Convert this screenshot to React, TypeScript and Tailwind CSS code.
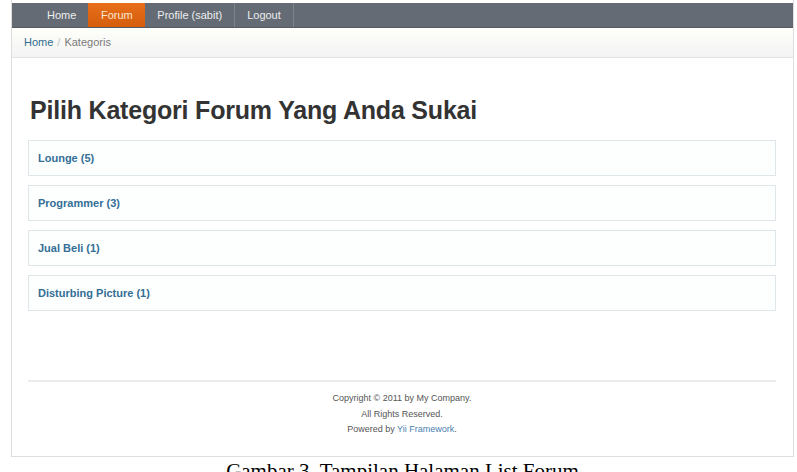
import React from "react";

const categories = [
  { name: "Lounge", count: 5 },
  { name: "Programmer", count: 3 },
  { name: "Jual Beli", count: 1 },
  { name: "Disturbing Picture", count: 1 },
];

const menu = [
  { label: "Home", active: false, sep: false },
  { label: "Forum", active: true, sep: false },
  { label: "Profile (sabit)", active: false, sep: true },
  { label: "Logout", active: false, sep: true },
];

export default function App() {
  return (
    <div className="w-[797px] h-[472px] overflow-hidden bg-white font-['Liberation_Sans',Arial,sans-serif]">
      {/* Page container */}
      <div className="ml-[11px] w-[783px] h-[457px] border-x border-b border-[#dedede] pt-[3px] flex flex-col">
        {/* Main menu */}
        <div className="h-[25px] bg-[#646b74] border-b border-[#555b63] flex items-stretch pl-[23px]">
          {menu.map((item) => (
            <div
              key={item.label}
              className={`flex items-center justify-center px-[12px] text-[11px] ${
                item.active
                  ? "bg-gradient-to-b from-[#e8701a] to-[#d45d0c] text-[#fbe6cf] w-[57px]"
                  : "text-[#eceef0]"
              } ${item.sep ? "border-r border-[#7d838b]" : ""}`}
            >
              {item.label}
            </div>
          ))}
        </div>

        {/* Breadcrumbs */}
        <div className="h-[30px] bg-gradient-to-b from-[#fffffb] to-[#f2f3f3] border-b border-[#e3e3e3] flex items-center pl-[12px] text-[11px]">
          <span className="text-[#2f6d8e]">Home</span>
          <span className="text-[#c5c5c5] mx-[4px]">/</span>
          <span className="text-[#7a7a7a]">Kategoris</span>
        </div>

        {/* Content */}
        <div className="pl-[16px] pr-[17px] pt-[37px] flex-1 flex flex-col">
          <h1 className="text-[25px] leading-[30px] font-bold text-[#333] pl-[2px] tracking-[-0.2px]">
            Pilih Kategori Forum Yang Anda Sukai
          </h1>

          <div className="mt-[15px] flex flex-col gap-[9px]">
            {categories.map((c) => (
              <div
                key={c.name}
                className="h-[36px] border border-[#dfe6ea] bg-[#fdfefe] flex items-center pl-[9px] text-[11px] font-bold text-[#336f96]"
              >
                {c.name} ({c.count})
              </div>
            ))}
          </div>

          {/* Footer */}
          <div className="mt-[69px] border-t-2 border-[#ececec] pt-[9px] text-center text-[9px] leading-[15.5px] text-[#555]">
            <div>Copyright © 2011 by My Company.</div>
            <div>All Rights Reserved.</div>
            <div>
              Powered by <span className="text-[#4a7fb0]">Yii Framework</span>.
            </div>
          </div>
        </div>
      </div>

      {/* Caption */}
      <div className="text-center font-['Liberation_Serif','Times_New_Roman',serif] text-[21px] leading-[24px] pt-[2px] pl-[8px] text-black">
        Gambar 3. Tampilan Halaman List Forum
      </div>
    </div>
  );
}
